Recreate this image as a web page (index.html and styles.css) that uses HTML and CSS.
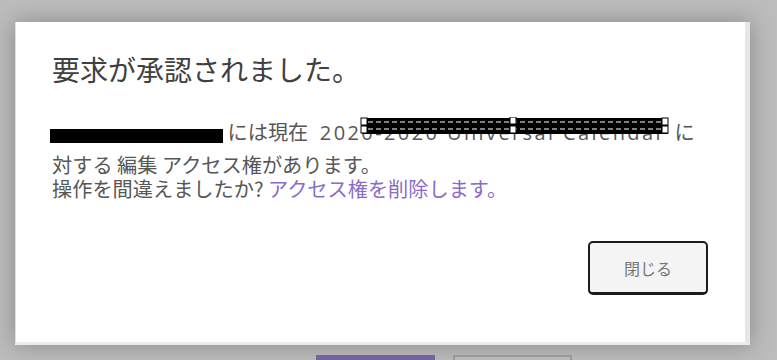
FILE: index.html
```html
<!DOCTYPE html>
<html lang="ja">
<head>
<meta charset="UTF-8">
<meta name="viewport" content="width=device-width, initial-scale=1.0">
<link rel="stylesheet" href="styles.css">
<title>要求が承認されました</title>
</head>
<body>
<div class="dialog">
  <h1 class="title">要求が承認されました。</h1>
  <div class="message">
    <div class="line first">
      <span class="redact"></span> には現在 <span class="cal">2020-2020 Universal Calendar</span> に
      <svg class="mark" width="310" height="18" viewBox="0 0 310 18">
        <rect x="2" y="1" width="306" height="16" fill="#000"/>
        <line x1="8" y1="5" x2="304" y2="5" stroke="#fff" stroke-width="1" stroke-dasharray="5 3"/>
        <line x1="8" y1="12" x2="304" y2="12" stroke="#fff" stroke-width="1" stroke-dasharray="5 3"/>
        <rect x="1" y="1" width="6" height="7" fill="#fff" stroke="#000"/>
        <rect x="1" y="9" width="6" height="7" fill="#fff" stroke="#000"/>
        <rect x="150" y="0" width="6" height="7" fill="#fff" stroke="#000"/>
        <rect x="150" y="9" width="6" height="7" fill="#fff" stroke="#000"/>
        <rect x="302" y="1" width="6" height="7" fill="#fff" stroke="#000"/>
        <rect x="302" y="9" width="6" height="7" fill="#fff" stroke="#000"/>
      </svg>
    </div>
    <div class="line">対する 編集 アクセス権があります。</div>
    <div class="line">操作を間違えましたか? <a href="#" class="undo">アクセス権を削除します。</a></div>
  </div>
  <div class="actions">
    <button class="close">閉じる</button>
  </div>
</div>
<div class="under">
  <span class="under-primary"></span>
  <span class="under-secondary"></span>
</div>
</body>
</html>
```

FILE: styles.css
```css
body {
  margin: 0;
  padding: 0;
  width: 777px;
  height: 360px;
  overflow: hidden;
  background-color: #bcbcbc;
  font-family: "Noto Sans CJK JP", "Noto Sans", sans-serif;
}

.dialog {
  box-sizing: border-box;
  margin: 22px 0 0 15px;
  width: 735px;
  height: 323px;
  background-color: #ffffff;
  border-right: 5px solid #e6e6e6;
  border-bottom: 3px solid #ececec;
  border-left: 1px solid #e0e0e0;
  box-shadow: 0 0 22px rgba(0, 0, 0, 0.28);
  padding: 30px 0 0 36px;
  display: flex;
  flex-direction: column;
}

.title {
  margin: 0;
  font-size: 28px;
  line-height: 34px;
  font-weight: 400;
  color: #404040;
}

.message {
  margin-top: 34px;
  font-size: 20.2px;
  line-height: 24px;
  color: #575757;
}

.line {
  white-space: nowrap;
}

.first {
  position: relative;
  margin-bottom: 8px;
}

.redact {
  display: inline-block;
  width: 173px;
  height: 14px;
  margin-left: -2px;
  vertical-align: -3px;
  background-color: #000;
}

.cal {
  margin-left: 7px;
  margin-right: 4px;
  font-family: "Open Sans", "Noto Sans", sans-serif;
  font-size: 20px;
  letter-spacing: 2.4px;
}

.mark {
  position: absolute;
  left: 308px;
  top: -3px;
}

.undo {
  color: #8a6bc9;
  text-decoration: none;
}

.actions {
  display: flex;
  justify-content: flex-end;
  margin-top: 40px;
  padding-right: 37px;
}

.close {
  width: 120px;
  height: 54px;
  border: 2px solid #1c1c1c;
  border-bottom-width: 3px;
  border-radius: 5px;
  background-color: #f4f4f4;
  color: #777777;
  font-family: "Noto Sans CJK JP", sans-serif;
  font-size: 16px;
  cursor: pointer;
}

.under {
  display: flex;
  gap: 18px;
  padding: 10px 0 0 316px;
}

.under-primary {
  width: 119px;
  height: 10px;
  background-color: #73659b;
}

.under-secondary {
  box-sizing: border-box;
  width: 119px;
  height: 10px;
  border: 2px solid #999999;
  border-bottom: none;
  background-color: #b8b8b8;
}
```
